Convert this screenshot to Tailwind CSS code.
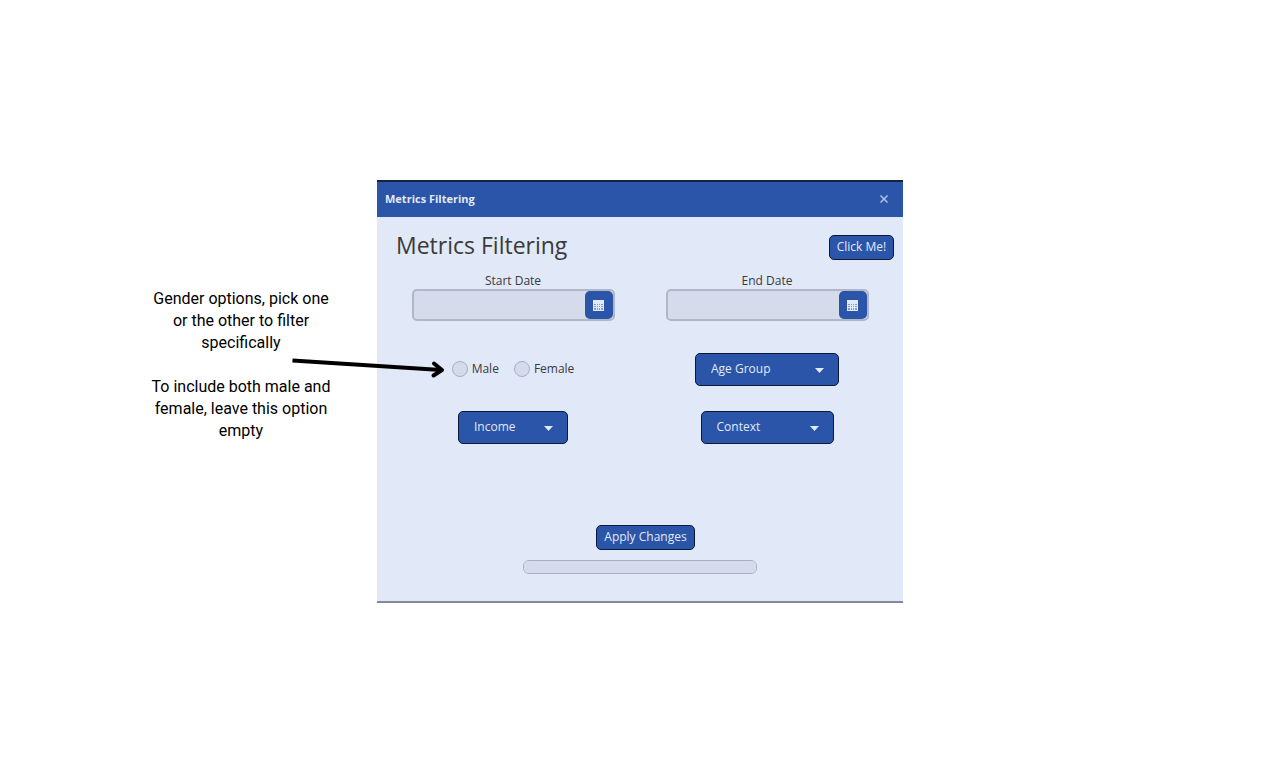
<!DOCTYPE html>
<html lang="en">
<head>
<meta charset="utf-8">
<meta name="viewport" content="width=device-width, initial-scale=1">
<title>Metrics Filtering</title>
<script src="https://cdn.jsdelivr.net/npm/@tailwindcss/browser@4"></script>
</head>
<body class="bg-white">
<main class="grid min-h-screen grid-cols-[1fr_minmax(0,526px)_1fr] items-center pt-[2px] font-['Open_Sans','Noto_Sans',sans-serif] text-[12px] leading-4 text-[#3a3a3a]">

  <aside class="relative mb-[52px] mr-[42px] w-[188px] justify-self-end text-center font-[Roboto,sans-serif] text-[16px] leading-[22px] text-black">
    <p>Gender options, pick one or the other to filter specifically</p>
    <p class="mt-[22px]">To include both male and female, leave this option empty</p>
    <svg class="absolute left-[144px] top-[66px] z-10" width="154" height="26" viewBox="0 0 154 26" fill="none" stroke="#000" stroke-width="4" aria-hidden="true">
      <path d="M1.500 6.500 150 16"/>
      <path d="M143 9.500 151 16 142.500 21.500" stroke-linecap="round" stroke-linejoin="round"/>
    </svg>
  </aside>

  <section class="border-t-2 border-t-[#16233f] border-b-2 border-b-[#83899a] bg-[#e1e8f7]" aria-label="Metrics Filtering">
    <header class="flex h-[35px] items-center justify-between bg-[#2a55a9] pl-2 pr-[13px] text-[#e3e9f6]">
      <span class="font-bold text-[11px]">Metrics Filtering</span>
      <button type="button" aria-label="Close" class="p-[1px]">
        <svg width="10" height="10" viewBox="0 0 10 10" stroke="#b3c3e3" stroke-width="1.500"><path d="M1.500 1.500 8.500 8.500M8.500 1.500 1.500 8.500"/></svg>
      </button>
    </header>

    <form class="px-[9px] pb-[27px] pt-[18px]">
      <div class="flex items-start justify-between pl-[10px]">
        <h1 class="text-[23px] leading-5">Metrics Filtering</h1>
        <button type="button" class="h-[25px] w-[65px] whitespace-nowrap rounded-[5px] border border-[#0c1a38] bg-[#2a55a9] text-[#e3e9f6]">Click Me!</button>
      </div>

      <div class="mt-[13px] grid grid-cols-2 justify-items-center">
        <div class="flex w-[203px] flex-col">
          <label for="start" class="text-center">Start Date</label>
          <div class="flex h-8 rounded-[5px] border-2 border-[#b1b6c8] bg-[#d5dbea]">
            <input id="start" type="text" class="min-w-0 flex-1 bg-transparent px-2 outline-none">
            <button type="button" aria-label="Pick start date" class="grid h-7 w-7 place-items-center rounded-[5px] bg-[#2a55a9] pt-[2px]">
              <svg width="11" height="11" viewBox="0 0 11 11"><path d="M0 0h11v11H0z" fill="#e1e8f7"/><path d="M1 4h2v1H1zM4 4h1v1H4zM6 4h1v1H6zM8 4h2v1H8zM1 6h2v1H1zM4 6h1v1H4zM6 6h1v1H6zM8 6h2v1H8zM1 8h2v2H1zM4 8h1v2H4zM6 8h1v2H6zM8 8h2v2H8z" fill="#7f9ace"/></svg>
            </button>
          </div>
        </div>
        <div class="flex w-[203px] flex-col">
          <label for="end" class="text-center">End Date</label>
          <div class="flex h-8 rounded-[5px] border-2 border-[#b1b6c8] bg-[#d5dbea]">
            <input id="end" type="text" class="min-w-0 flex-1 bg-transparent px-2 outline-none">
            <button type="button" aria-label="Pick end date" class="grid h-7 w-7 place-items-center rounded-[5px] bg-[#2a55a9] pt-[2px]">
              <svg width="11" height="11" viewBox="0 0 11 11"><path d="M0 0h11v11H0z" fill="#e1e8f7"/><path d="M1 4h2v1H1zM4 4h1v1H4zM6 4h1v1H6zM8 4h2v1H8zM1 6h2v1H1zM4 6h1v1H4zM6 6h1v1H6zM8 6h2v1H8zM1 8h2v2H1zM4 8h1v2H4zM6 8h1v2H6zM8 8h2v2H8z" fill="#7f9ace"/></svg>
            </button>
          </div>
        </div>
      </div>

      <div class="mt-8 grid grid-cols-2 items-center justify-items-center gap-y-[25px]">
        <div class="flex gap-[15px]">
          <label class="flex items-center gap-1"><input type="radio" name="gender" class="size-4 appearance-none rounded-full border border-[#a9afc3] bg-[#d5dbea] checked:bg-[#2a55a9]">Male</label>
          <label class="flex items-center gap-1"><input type="radio" name="gender" class="size-4 appearance-none rounded-full border border-[#a9afc3] bg-[#d5dbea] checked:bg-[#2a55a9]">Female</label>
        </div>
        <div class="relative w-36">
          <select aria-label="Age Group" class="block h-[33px] w-full appearance-none rounded-[5px] border border-[#0c1a38] bg-[#2a55a9] pl-[15px] text-[#e3e9f6]"><option>Age Group</option></select>
          <svg class="pointer-events-none absolute right-[15px] top-[15px]" width="9" height="5" viewBox="0 0 9 5"><path d="M0 0h9L4.500 5z" fill="#e3e9f6"/></svg>
        </div>
        <div class="relative w-[110px]">
          <select aria-label="Income" class="block h-[33px] w-full appearance-none rounded-[5px] border border-[#0c1a38] bg-[#2a55a9] pl-[15px] text-[#e3e9f6]"><option>Income</option></select>
          <svg class="pointer-events-none absolute right-[15px] top-[15px]" width="9" height="5" viewBox="0 0 9 5"><path d="M0 0h9L4.500 5z" fill="#e3e9f6"/></svg>
        </div>
        <div class="relative w-[133px]">
          <select aria-label="Context" class="block h-[33px] w-full appearance-none rounded-[5px] border border-[#0c1a38] bg-[#2a55a9] pl-[15px] text-[#e3e9f6]"><option>Context</option></select>
          <svg class="pointer-events-none absolute right-[15px] top-[15px]" width="9" height="5" viewBox="0 0 9 5"><path d="M0 0h9L4.500 5z" fill="#e3e9f6"/></svg>
        </div>
      </div>

      <div class="mt-[81px] flex justify-center pl-[11px]">
        <button type="submit" class="h-[25px] w-[99px] whitespace-nowrap rounded-[5px] border border-[#0c1a38] bg-[#2a55a9] text-[#e3e9f6]">Apply Changes</button>
      </div>
      <progress aria-label="Progress" value="0" max="100" class="mx-auto mt-[10px] block h-[14px] w-[234px] appearance-none overflow-hidden rounded-[6px] border border-[#a9afc3] bg-[#d5dbea] [&::-webkit-progress-bar]:bg-[#d5dbea]"></progress>
    </form>
  </section>
</main>
</body>
</html>
